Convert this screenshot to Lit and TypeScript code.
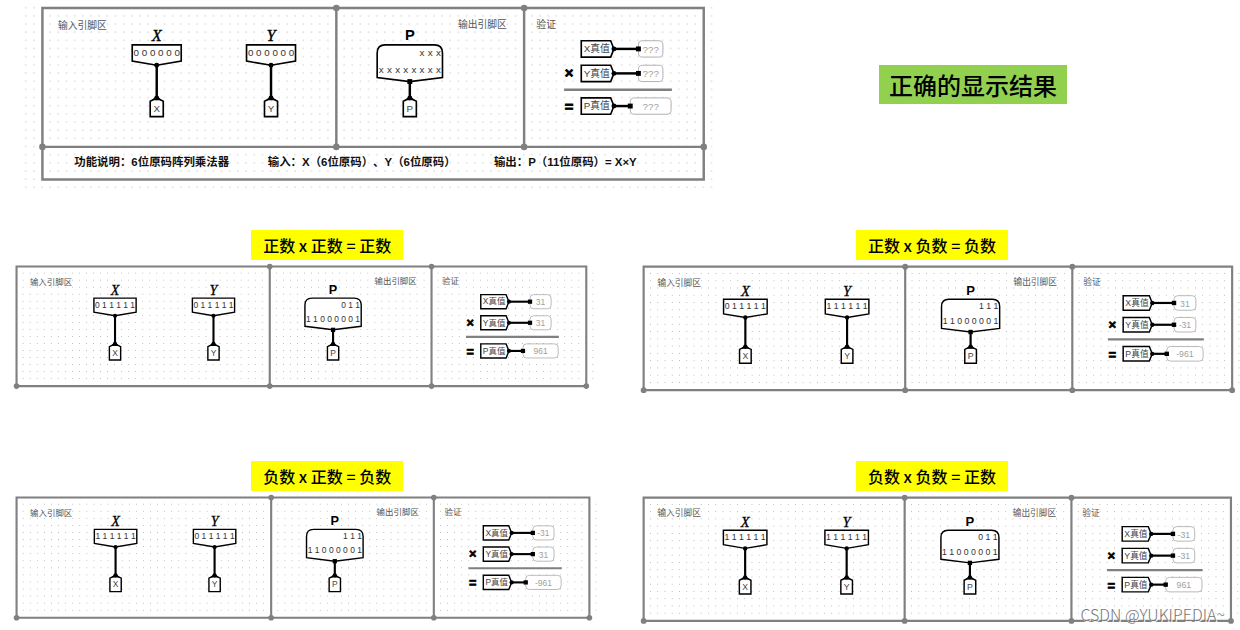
import { LitElement, html, svg, css, nothing } from "lit";
import { customElement, property } from "lit/decorators.js";

interface Circuit {
  x: string;
  y: string;
  high: string;
  low: string;
  xValue: string;
  yValue: string;
  pValue: string;
}

interface Case extends Circuit {
  title: string;
  side: "left" | "right";
  /** share of the column that the drawing fills, in percent */
  share: number;
}

const UNKNOWN: Circuit = {
  x: "000000", y: "000000", high: "xxx", low: "xxxxxxxx",
  xValue: "???", yValue: "???", pValue: "???",
};

const CASES: Case[] = [
  { title: "正数 x 正数 = 正数", side: "left", share: 92, x: "011111", y: "011111", high: "011", low: "11000001", xValue: "31", yValue: "31", pValue: "961" },
  { title: "正数 x 负数 = 负数", side: "right", share: 99.3, x: "011111", y: "111111", high: "111", low: "11000001", xValue: "31", yValue: "-31", pValue: "-961" },
  { title: "负数 x 正数 = 负数", side: "left", share: 92.5, x: "111111", y: "011111", high: "111", low: "11000001", xValue: "-31", yValue: "31", pValue: "-961" },
  { title: "负数 x 负数 = 正数", side: "right", share: 99.1, x: "111111", y: "111111", high: "011", low: "11000001", xValue: "-31", yValue: "-31", pValue: "961" },
];

/** One circuit sheet, drawn on a grid of 10 units. */
@customElement("circuit-sheet")
export class CircuitSheet extends LitElement {
  @property({ attribute: false }) data: Circuit = UNKNOWN;
  @property({ type: Boolean }) notes = false;

  static styles = css`
    :host { display: block; }
    svg { display: block; width: 100%; height: auto; overflow: visible; }
    text { font-family: "Liberation Sans", "Noto Sans CJK SC", sans-serif; text-spacing-trim: space-all; }
    .grid-dot { fill: #888; }
    .frame { fill: none; stroke: #808080; stroke-width: 3; }
    .node { fill: #808080; }
    .part { fill: #fff; stroke: #000; stroke-width: 2; }
    .wire { stroke: #000; stroke-width: 3; }
    .joint { fill: #000; }
    .area { font-size: 12px; fill: #555; }
    .name { font-size: 18px; font-weight: bold; text-anchor: middle; fill: #000; }
    .operand { font-family: "Liberation Serif", serif; font-size: 20px; font-style: italic; font-weight: normal; stroke: #000; stroke-width: 0.4px; }
    .bit { font-size: 12px; text-anchor: middle; fill: #333; }
    .tag { font-size: 12px; text-anchor: middle; fill: #444; }
    .box { fill: #fff; stroke: #a0a0a0; stroke-width: 1; }
    .value { font-size: 12px; text-anchor: middle; fill: #a0a0a0; }
    .sign { font-size: 18px; font-weight: bold; text-anchor: middle; fill: #000; stroke: #000; stroke-width: 1; }
    .note { font-size: 14px; font-weight: bold; fill: #111; }
  `;

  private bits(value: string, start: number, base: number) {
    return [...value].map((b, i) => svg`<text class="bit" x=${start + i * 10} y=${base}>${b}</text>`);
  }

  private pin(name: string, cx: number, from: number) {
    return svg`
      <path class="wire" d="M${cx} ${from}V110"></path>
      <path class="part" d="M${cx} 110L${cx + 8} 114V133H${cx - 8}V114Z"></path>
      <circle class="joint" cx=${cx} cy="110" r="3"></circle>
      <path class="joint" d="M${cx - 6} 113L${cx} 107L${cx + 6} 113Z"></path>
      <text class="tag" x=${cx} y="127">${name}</text>`;
  }

  private operand(name: string, value: string, cx: number) {
    return svg`
      ${this.pin(name, cx, 70)}
      <text class="name operand" x=${cx} y="40">${name}</text>
      <path class="part" d="M${cx - 30} 45H${cx + 30}V65L${cx} 70L${cx - 30} 65Z"></path>
      <circle class="joint" cx=${cx} cy="70" r="3"></circle>
      ${this.bits(value, cx - 25, 59)}`;
  }

  private check(name: string, value: string, cy: number, boxX: number) {
    return svg`
      <path class="wire" d="M700 ${cy}H${boxX}"></path>
      <path class="part" d="M660 ${cy - 10}H696L700 ${cy}L696 ${cy + 10}H660Z"></path>
      <circle class="joint" cx="700" cy=${cy} r="3"></circle>
      <text class="tag" x="679" y=${cy + 4}>${name}真值</text>
      <rect class="box" x=${boxX} y=${cy - 10} width=${boxX === 730 ? 30 : 50} height="20" rx="5"></rect>
      <rect class="joint" x=${boxX - 3} y=${cy - 3} width="6" height="6"></rect>
      <text class="value" x="745" y=${cy + 5}>${value}</text>`;
  }

  render() {
    const d = this.data;
    const left = this.notes ? -25 : -5;
    const bottom = this.notes ? 220 : 170;
    const dotsLeft = this.notes ? -25 : 5;
    const dotsTop = this.notes ? -5 : 5;
    const dotsBottom = this.notes ? 225 : 165;
    return html`
      <svg viewBox="${left} -5 ${this.notes ? 850 : 820} ${bottom + 10}">
        <defs>
          <pattern id="dots" x="-5" y="-5" width="10" height="10" patternUnits="userSpaceOnUse">
            <rect class="grid-dot" x="4" y="4" width="1" height="1"></rect>
          </pattern>
        </defs>
        <rect x=${dotsLeft} y=${dotsTop} width=${825 - dotsLeft} height=${dotsBottom - dotsTop} fill="url(#dots)"></rect>
        <path class="frame" d="M0 0H810V170H0ZM360 0V170M590 0V170"></path>
        ${this.notes ? svg`<path class="frame" d="M0 170V210H810V170"></path>` : nothing}
        ${[[360, 0], [590, 0], [0, 170], [360, 170], [590, 170], [810, 170]].map(
          ([x, y]) => svg`<circle class="node" cx=${x} cy=${y} r="4"></circle>`)}

        <text class="area" x="19" y="26">输入引脚区</text>
        <text class="area" x="509" y="25">输出引脚区</text>
        <text class="area" x="605" y="25">验证</text>

        ${this.operand("X", d.x, 140)}
        ${this.operand("Y", d.y, 280)}

        ${this.pin("P", 450, 90)}
        <text class="name" x="450" y="39">P</text>
        <path class="part" d="M410 55Q410 45 420 45H480Q490 45 490 55V85L450 90L410 85Z"></path>
        <rect class="joint" x="447" y="87" width="6" height="6"></rect>
        ${this.bits(d.high, 465, 59)}
        ${this.bits(d.low, 415, 79)}

        ${this.check("X", d.xValue, 50, 730)}
        ${this.check("Y", d.yValue, 80, 730)}
        ${this.check("P", d.pValue, 120, 720)}
        <path class="frame" d="M639 100H771"></path>
        <text class="sign" x="645" y="86">×</text>
        <text class="sign" x="645" y="127">=</text>

        ${this.notes ? svg`
          <text class="note" x="39" y="193">功能说明：6位原码阵列乘法器</text>
          <text class="note" x="276" y="193">输入：X（6位原码）、Y（6位原码）</text>
          <text class="note" x="553" y="193">输出：P（11位原码）= X×Y</text>` : nothing}
      </svg>`;
  }
}

@customElement("app-root")
export class AppRoot extends LitElement {
  static styles = css`
    :host {
      display: block;
      position: relative;
      overflow: hidden;
      min-height: 100vh;
      background: #fff;
      color: #000;
      font-family: "Noto Sans CJK SC", "Noto Sans", sans-serif;
    }
    .intro {
      display: grid;
      grid-template-columns: 22fr 694fr 163fr 361fr;
      align-items: start;
      padding-top: 4px;
    }
    .intro circuit-sheet { grid-column: 2; }
    h1 {
      grid-column: 4;
      justify-self: start;
      margin: 61px 0 0;
      padding: 0 10px;
      background: #92d050;
      font-size: 24px;
      line-height: 39px;
      font-weight: 500;
      white-space: nowrap;
    }
    .cases {
      display: grid;
      grid-template-columns: 627fr 600fr;
      row-gap: 67px;
      padding: 38px 0 0 13px;
    }
    .case { margin: 0; display: grid; gap: 3px; align-content: start; }
    figcaption {
      justify-self: start;
      padding: 0 12px;
      background: #ff0;
      font-size: 16px;
      line-height: 30px;
      font-weight: 500;
      white-space: nowrap;
    }
    .left figcaption { margin-left: 38%; }
    .right figcaption { margin-left: 36%; }
    .credit {
      position: absolute;
      right: 15px;
      bottom: 4px;
      font-size: 16px;
      line-height: 24px;
      font-weight: 300;
      color: #777;
      text-shadow: 1px 1px 0 #fff;
    }
  `;

  render() {
    return html`
      <section class="intro">
        <circuit-sheet .data=${UNKNOWN} notes></circuit-sheet>
        <h1>正确的显示结果</h1>
      </section>
      <section class="cases">
        ${CASES.map((c) => html`
          <figure class="case ${c.side}">
            <figcaption>${c.title}</figcaption>
            <circuit-sheet .data=${c} style="width: ${c.share}%"></circuit-sheet>
          </figure>`)}
      </section>
      <span class="credit">CSDN @YUKIPEDIA~</span>`;
  }
}
